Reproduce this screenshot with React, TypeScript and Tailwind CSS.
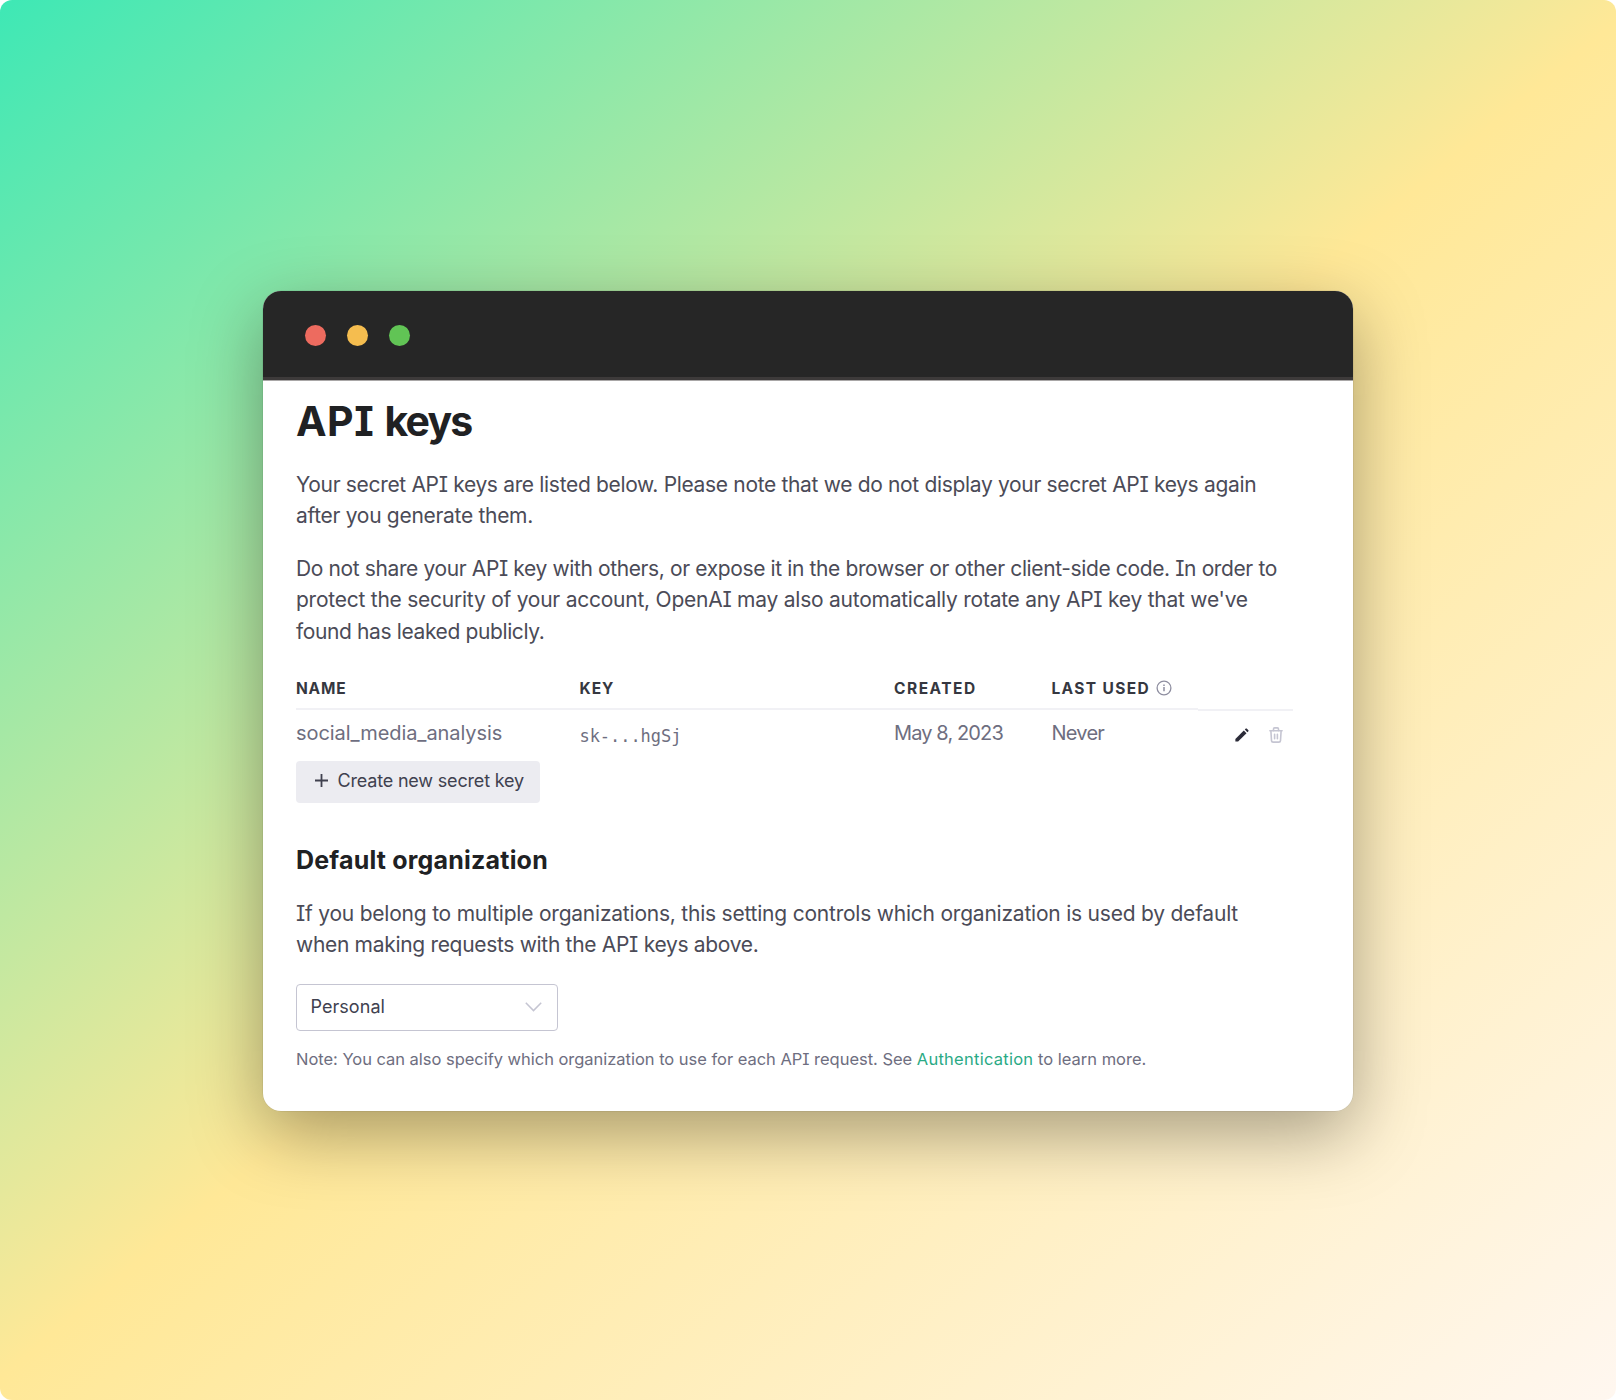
import React from "react";

const columns = "grid grid-cols-[283.5px_314.5px_157.5px_146.5px_95px]";

function InfoIcon() {
  return (
    <svg className="ml-[6px] size-4" viewBox="0 0 16 16" fill="none" stroke="#8e8ea0" strokeWidth="1.3">
      <circle cx="8" cy="8" r="6.9" />
      <path d="M8 7.1v4.2" strokeWidth="1.5" />
      <path d="M8 4.6v1.5" strokeWidth="1.5" />
    </svg>
  );
}

function PencilIcon() {
  return (
    <svg className="size-[14px]" viewBox="0 0 14 14" fill="#2b2b38">
      <path d="M0.4 13.6V10.9L8.8 2.5L11.5 5.2L3.1 13.6Z" />
      <path d="M9.8 1.6L10.8 0.6Q11.2 0.2 11.7 0.6L13.4 2.3Q13.8 2.7 13.4 3.2L12.4 4.2Z" />
    </svg>
  );
}

function TrashIcon() {
  return (
    <svg
      className="h-4 w-[14px]"
      viewBox="0 0 14 16"
      fill="none"
      stroke="#c5c5d2"
      strokeWidth="1.6"
      strokeLinecap="round"
      strokeLinejoin="round"
    >
      <path d="M0.9 3.8H13.1" />
      <path d="M4.5 3.6V2Q4.5 0.9 5.6 0.9H8.4Q9.5 0.9 9.5 2V3.6" />
      <path d="M1.9 4L2.5 13.6Q2.6 15.1 4.1 15.1H9.9Q11.4 15.1 11.5 13.6L12.1 4" />
      <path d="M5.6 7.2V11.8M8.4 7.2V11.8" />
    </svg>
  );
}

export default function App() {
  return (
    <div className="h-[1400px] w-[1616px] bg-white">
      <div className="h-full w-full rounded-[12px] bg-[linear-gradient(140deg,rgb(62,232,181)_0%,rgb(255,232,151)_50%,rgb(255,247,240)_100%)] pt-[291px] pl-[263px] font-['Inter',sans-serif] [font-feature-settings:'cv08']">
        <div className="flex h-[820px] w-[1090px] flex-col overflow-hidden rounded-[18px] bg-white shadow-[0_0_0_0.5px_rgba(0,0,0,0.1),0_22px_70px_rgba(0,0,0,0.35)]">
          <div className="flex h-[90px] shrink-0 items-center gap-[21px] border-b border-[#a9a7a7] bg-[linear-gradient(#262626_86px,#3d3a3a_86px)] pl-[42px]">
            <span className="size-[21px] rounded-full bg-[#ed6b5f]" />
            <span className="size-[21px] rounded-full bg-[#f5bd4f]" />
            <span className="size-[21px] rounded-full bg-[#61c455]" />
          </div>

          <div className="pl-[33px] whitespace-nowrap text-[#4b4b57]">
            <h1 className="mt-[16px] text-[41px] leading-[48px] font-[650] text-[#202123]">
              <span className="tracking-[0.5px]">API </span>
              <span className="tracking-[-1.8px]">keys</span>
            </h1>

            <p className="mt-[23.6px] text-[21px] leading-[31.5px]">
              <span className="block tracking-[-0.33px]">
                Your secret API keys are listed below. Please note that we do not display your secret API keys again
              </span>
              <span className="block tracking-[-0.3px]">after you generate them.</span>
            </p>
            <p className="mt-[21px] text-[21px] leading-[31.5px]">
              <span className="block tracking-[-0.38px]">
                Do not share your API key with others, or expose it in the browser or other client-side code. In order to
              </span>
              <span className="block tracking-[-0.24px]">
                protect the security of your account, OpenAI may also automatically rotate any API key that we've
              </span>
              <span className="block tracking-[-0.38px]">found has leaked publicly.</span>
            </p>

            <div className="mt-[30px]">
              <div className={columns + " text-[15.5px] leading-6 font-[650] text-[#353740]"}>
                <div className="h-[33px] border-b-2 border-[#f1f1f5] tracking-[0.8px]">NAME</div>
                <div className="h-[33px] border-b-2 border-[#f1f1f5] tracking-[1px]">KEY</div>
                <div className="h-[33px] border-b-2 border-[#f1f1f5] tracking-[1.5px]">CREATED</div>
                <div className="flex h-[33px] border-b-2 border-[#f1f1f5]">
                  <span className="tracking-[1.35px]">LAST USED</span>
                  <span className="mt-[3px]">
                    <InfoIcon />
                  </span>
                </div>
                <div className="h-[34px] border-b-2 border-[#f1f1f5]" />
              </div>
              <div className={columns + " h-[50px] pt-[6.5px] text-[20px] leading-[30px] text-[#6e6e80]"}>
                <div className="tracking-[-0.07px]">social_media_analysis</div>
                <div className="pt-[3px] font-['DejaVu_Sans_Mono',monospace] text-[17px] tracking-[-0.05px]">sk-...hgSj</div>
                <div className="tracking-[-0.88px]">May 8, 2023</div>
                <div className="tracking-[-0.75px]">Never</div>
                <div className="flex items-start gap-[20px] pt-[10px] pl-[36.5px]">
                  <PencilIcon />
                  <span className="-mt-px">
                    <TrashIcon />
                  </span>
                </div>
              </div>
            </div>

            <button className="flex h-[42px] w-[244px] items-center rounded-[4px] bg-[#ececf1] pl-[18.5px] text-[18px] leading-6 text-[#40414f]">
              <svg className="-mt-[3px] size-[13px]" viewBox="0 0 13 13" stroke="#40414f" strokeWidth="1.8">
                <path d="M6.5 0V13M0 6.5H13" />
              </svg>
              <span className="-mt-[3px] ml-[10px] tracking-[-0.18px]">Create new secret key</span>
            </button>

            <h2 className="mt-[41px] text-[25px] leading-8 font-[650] tracking-[0.2px] text-[#202123]">
              Default organization
            </h2>
            <p className="mt-[21.5px] text-[21px] leading-[31.5px]">
              <span className="block tracking-[-0.22px]">
                If you belong to multiple organizations, this setting controls which organization is used by default
              </span>
              <span className="block tracking-[-0.31px]">when making requests with the API keys above.</span>
            </p>

            <div className="mt-[23.5px] flex h-[47px] w-[262px] items-center justify-between rounded-[4px] border border-[#c5c5d2] pr-[15px] pl-[13.5px] text-[18px] leading-6 text-[#40414f]">
              <span className="-mt-px tracking-[0.05px]">Personal</span>
              <svg className="-mt-px h-[10px] w-[17px]" viewBox="0 0 17 10" fill="none" stroke="#c5c5d2" strokeWidth="1.5">
                <path d="M0.8 0.8L8.5 8.6L16.2 0.8" />
              </svg>
            </div>

            <p className="mt-[16px] text-[16.5px] leading-6 text-[#6e6e80]">
              <span className="tracking-[-0.03px]">
                Note: You can also specify which organization to use for each API request. See{" "}
              </span>
              <a className="tracking-[0.26px] text-[#2aaa85]">Authentication</a> to learn more.
            </p>
          </div>
        </div>
      </div>
    </div>
  );
}
